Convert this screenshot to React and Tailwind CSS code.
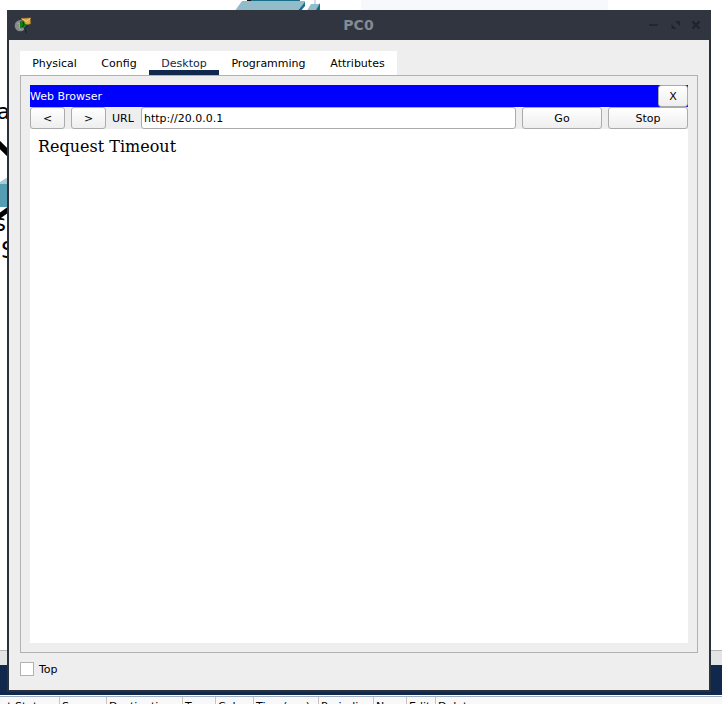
const tabs = [
  { name: 'Physical', width: 'w-[69px]' },
  { name: 'Config', width: 'w-[60px]' },
  { name: 'Desktop', width: 'w-[70px]', active: true },
  { name: 'Programming', width: 'w-[99px]' },
  { name: 'Attributes', width: 'w-[79px]' },
];

const columns = [
  { name: 'Last Status', width: 'w-[60px] justify-end pr-[9px]' },
  { name: 'Source', width: 'w-[47px] pl-[2px]' },
  { name: 'Destination', width: 'w-[76px] pl-[2px]' },
  { name: 'Type', width: 'w-[33px] pl-[2px]' },
  { name: 'Color', width: 'w-[38px] pl-[2px]' },
  { name: 'Time(sec)', width: 'w-[65px] pl-[2px]' },
  { name: 'Periodic', width: 'w-[55px] pl-[2px]' },
  { name: 'Num', width: 'w-[33px] pl-[2px]' },
  { name: 'Edit', width: 'w-[29px] pl-[2px]' },
];

function Button({ children, className }) {
  return (
    <button
      className={`flex h-[22px] shrink-0 items-center justify-center rounded-[3px] border border-[#ababab] bg-gradient-to-b from-white to-[#eeeeee] leading-none text-black ${className}`}
    >
      {children}
    </button>
  );
}

function AppIcon() {
  return (
    <svg width="18" height="18" viewBox="0 0 18 18">
      <circle cx="6.3" cy="9.700" r="5.600" fill="#858b88" />
      <path d="M3 7l3 1-1 3 2 3" stroke="#a5aaa6" fill="none" />
      <path d="M7.5 2.2l9-.4.4 6-6 2.200z" fill="#dca746" stroke="#6b4a16" strokeWidth=".6" />
      <path d="M7.5 2.8l5 2.6 4-3" fill="none" stroke="#f4d37e" />
      <path d="M6 5.500l4-1 1 3 2 1-2 4-3-1-2 1z" fill="#137b19" />
      <path d="M9 6l1 3-2 2" stroke="#0a360e" fill="none" />
      <path d="M10.5 12l2 5M11 12l3-3" stroke="#172442" strokeWidth="1.2" />
    </svg>
  );
}

function WindowControls() {
  return (
    <svg width="54" height="14" viewBox="0 0 54 14" className="mr-[9px]">
      <path d="M1 7h9" stroke="#1f242d" strokeWidth="1.6" />
      <path d="M27 3h5v5zM23.500 6v5h5z" fill="#1f242d" />
      <path d="M44.500 3.500l7 7M51.500 3.500l-7 7" stroke="#1f242d" strokeWidth="2.300" />
    </svg>
  );
}

function Backdrop() {
  return (
    <div className="flex h-full flex-col">
      <div className="relative flex-1 overflow-hidden bg-white">
        <svg width="722" height="300" viewBox="0 0 722 300" className="block">
          <path d="M361 0h247v10h-247z" fill="#f6f8fc" />
          <path d="M247 0h53v1h-53z" fill="#17829c" />
          <path d="M242 1h63v2l-6 9h-65z" fill="#93bccb" />
          <path d="M305 2v4l-5 6h-3z" fill="#176f89" />
          <path d="M247 .5h52" stroke="#176f89" />
          <path d="M247 0h4v1h-4z" fill="#111" />
          <path d="M315 0v4" stroke="#9abfc9" />
          <path d="M311 4h9l-4 8h-10z" fill="#93bccb" />
          <path d="M320 3v7h-4z" fill="#176f89" />
          <path d="M-2 143L10 155" stroke="#000" strokeWidth="6" />
          <path d="M0 182l8-5v8H0z" fill="#a6cad4" />
          <path d="M0 184h8v23H0z" fill="#559db2" />
          <path d="M-2 217L9 209" stroke="#000" strokeWidth="5" />
          <g fontFamily="DejaVu Sans, sans-serif" fontSize="23">
            <text x="-3" y="119" fontSize="21">a</text>
            <text x="-6" y="231">s</text>
            <text x="1" y="258">S</text>
          </g>
        </svg>
      </div>
      <div className="h-[15px] border-t border-[#b5b5b5] bg-[#e3e4e6]" />
      <div className="h-[30px] bg-[#10284b]" />
      <div className="flex h-[9px] flex-col overflow-hidden border-t border-white bg-[#f8f8f8]">
        <div className="h-px shrink-0 bg-[#9aaabd]" />
        <div className="flex h-[20px] shrink-0">
          {columns.map((c) => (
            <div key={c.name} className={`flex h-full shrink-0 overflow-hidden whitespace-nowrap border-r border-[#c5c5c5] pt-[3px] leading-[13px] ${c.width}`}>
              {c.name}
            </div>
          ))}
          <div className="pl-[2px] pt-[3px] leading-[13px]">Delete</div>
        </div>
      </div>
    </div>
  );
}

export default function App() {
  return (
    <div className="relative h-[704px] w-[722px] overflow-hidden font-['DejaVu_Sans',sans-serif] text-[11px] text-black">
      <Backdrop />
      <div className="absolute left-[7px] top-[10px] flex h-[682px] w-[704px] flex-col border-x-2 border-b-2 border-[#2b303a] bg-[#eeeeee]">
        <header className="-mx-[2px] flex h-[30px] shrink-0 items-center justify-between bg-[#30353f]">
          <div className="flex w-[62px] pl-[7px]">
            <AppIcon />
          </div>
          <h1 className="text-[14px] font-bold leading-none text-[#868a91]">PC0</h1>
          <WindowControls />
        </header>
        <main className="flex flex-1 flex-col pl-[11px] pr-[11px] pt-[11px]">
          <nav className="flex h-[24px] w-[377px] bg-white">
            {tabs.map((t) => (
              <div
                key={t.name}
                className={`flex h-full items-center justify-center border-b-[5px] pt-[6px] leading-[13px] ${t.width} ${t.active ? 'border-[#10284b] text-[#10284b]' : 'border-white'}`}
              >
                {t.name}
              </div>
            ))}
          </nav>
          <section className="flex h-[578px] flex-col border border-[#b2b2b2] px-[9px] pb-[9px] pt-[9px]">
            <div className="flex h-[22px] shrink-0 items-center justify-between bg-[#0000ff] text-white">
              <span className="pt-px leading-[13px]">Web Browser</span>
              <Button className="w-[30px]">X</Button>
            </div>
            <div className="flex h-[22px] shrink-0 items-center">
              <Button className="w-[35px]">&lt;</Button>
              <Button className="ml-[6px] w-[35px]">&gt;</Button>
              <span className="w-[35px] shrink-0 pl-[6px] pt-px leading-[13px]">URL</span>
              <div className="flex h-[22px] w-[375px] shrink-0 items-center rounded-[3px] border border-[#ababab] bg-white pl-[2px] pt-px leading-[13px]">
                http://20.0.0.1
              </div>
              <Button className="ml-[6px] w-[80px]">Go</Button>
              <Button className="ml-[6px] w-[80px]">Stop</Button>
            </div>
            <div className="flex-1 bg-white px-[8px] pt-[8px] font-['DejaVu_Serif',serif] text-[16px] leading-[19px]">
              Request Timeout
            </div>
          </section>
          <label className="mt-[9px] flex h-[14px] items-center gap-[5px]">
            <span className="h-[14px] w-[14px] border border-[#b2b2b2] bg-white" />
            <span className="pt-px leading-[13px]">Top</span>
          </label>
        </main>
      </div>
    </div>
  );
}
